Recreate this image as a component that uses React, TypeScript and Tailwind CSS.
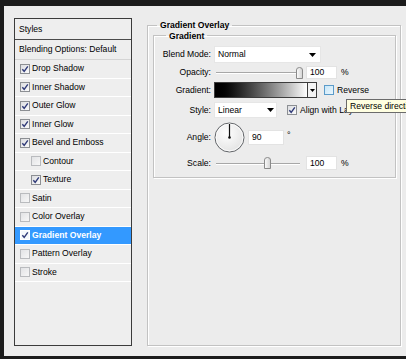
const font = "font-['Liberation_Sans',Arial,sans-serif]";

const styles = [
	{ label: "Drop Shadow", checked: true },
	{ label: "Inner Shadow", checked: true },
	{ label: "Outer Glow", checked: true },
	{ label: "Inner Glow", checked: true },
	{ label: "Bevel and Emboss", checked: true },
	{ label: "Contour", checked: false, indent: true },
	{ label: "Texture", checked: true, indent: true },
	{ label: "Satin", checked: false },
	{ label: "Color Overlay", checked: false },
	{ label: "Gradient Overlay", checked: true, active: true },
	{ label: "Pattern Overlay", checked: false },
	{ label: "Stroke", checked: false },
];

function Check({
	checked,
	active,
	hover,
}: {
	checked?: boolean;
	active?: boolean;
	hover?: boolean;
}) {
	const box = active
		? "border-white bg-[#f4f8fc]"
		: hover
			? "border-[#5b9bc9] bg-gradient-to-br from-[#c7e6f8] to-[#eaf6fd]"
			: checked
				? "border-[#8c8f93] bg-gradient-to-br from-[#dcdde0] to-[#fbfbfb]"
				: "border-[#b9bbbe] bg-gradient-to-br from-[#e2e3e5] to-[#f7f7f7]";
	return (
		<span
			className={`w-[10px] h-[10px] border shrink-0 flex items-center justify-center ${box}`}
		>
			{checked && (
				<svg width="8" height="8" viewBox="0 0 8 8">
					<path
						d="M1.3 4.2 L3.2 6.3 L6.8 1.4"
						fill="none"
						stroke="#2f3a78"
						strokeWidth="1.4"
					/>
				</svg>
			)}
		</span>
	);
}

function Arrow() {
	return (
		<svg width="7" height="4" viewBox="0 0 7 4">
			<path d="M0 0 H7 L3.5 4 Z" fill="#000" />
		</svg>
	);
}

function Slider({ pos }: { pos: number }) {
	return (
		<div className="relative w-[88px] h-full flex items-center">
			<div className="w-[84px] ml-[2px] h-[1px] bg-[#a7a7a7] shadow-[0_1px_0_#ffffff]" />
			<svg
				className="absolute top-1/2 -translate-y-1/2"
				style={{ left: pos }}
				width="7"
				height="12"
				viewBox="0 0 7 12"
			>
				<defs>
					<linearGradient id="thumb" x1="0" y1="0" x2="1" y2="0">
						<stop offset="0" stopColor="#fdfdfd" />
						<stop offset="1" stopColor="#d2d2d2" />
					</linearGradient>
				</defs>
				<path
					d="M0.5 3 Q0.5 0.5 3.5 0.5 Q6.5 0.5 6.5 3 V11.5 H0.5 Z"
					fill="url(#thumb)"
					stroke="#8a8a8a"
				/>
			</svg>
		</div>
	);
}

function NumBox({ value, w }: { value: string; w: string }) {
	return (
		<div
			className={`${w} h-full bg-white border border-[#e3e3e3] flex items-center pl-[3px]`}
		>
			{value}
		</div>
	);
}

function Label({ children }: { children: string }) {
	return <span className="w-[58px] text-right shrink-0 pr-[1px]">{children}</span>;
}

function Dial() {
	return (
		<svg width="31" height="31" viewBox="0 0 31 31">
			<defs>
				<radialGradient id="dial" cx="0.4" cy="0.35" r="0.7">
					<stop offset="0" stopColor="#ffffff" />
					<stop offset="1" stopColor="#e2e2e2" />
				</radialGradient>
			</defs>
			<circle cx="15.5" cy="15.5" r="14.5" fill="url(#dial)" stroke="#5f6266" />
			<circle cx="15.5" cy="15.5" r="13.4" fill="none" stroke="#ffffff" strokeOpacity="0.8" />
			<line x1="15.5" y1="15.5" x2="15.5" y2="2" stroke="#111" strokeWidth="1.2" />
			<circle cx="15.5" cy="15.5" r="1.3" fill="#111" />
		</svg>
	);
}

export default function App() {
	return (
		<div
			className={`w-[406px] h-[359px] bg-[#1b1b1b] pt-[6px] pl-[4px] pb-[3px] overflow-hidden ${font} text-[8.6px] text-black leading-none`}
		>
			<div className="relative h-full bg-[#ececec] flex items-start pl-[10px] pt-[12px]">
				{/* style list */}
				<div className="w-[118px] h-[328px] border border-[#3b3b3b] bg-[#eeeeee] flex flex-col shrink-0">
					<div className="h-[21px] border-b border-[#4a4a4a] flex items-center pl-[4px]">
						Styles
					</div>
					<div className="h-[20px] border-b border-[#d4d4d4] flex items-center pl-[4px]">
						Blending Options: Default
					</div>
					{styles.map((s) => (
						<div
							key={s.label}
							className={`h-[18.5px] border-b border-white flex items-center gap-[2px] ${
								s.indent ? "pl-[16px]" : "pl-[5px]"
							} ${s.active ? "bg-[#3399ff] text-white font-bold" : ""}`}
						>
							<Check checked={s.checked} active={s.active} />
							<span>{s.label}</span>
						</div>
					))}
				</div>

				{/* right side */}
				<fieldset className="ml-[15px] mt-[3px] w-[254px] h-[325px] border border-[#c2c2c2] shadow-[inset_1px_1px_0_#ffffff,1px_1px_0_#ffffff] px-[5px] pr-[4px]">
					<legend className="ml-[4px] px-[3px] font-bold">Gradient Overlay</legend>
					<fieldset className="mt-[2px] border border-[#c2c2c2] shadow-[inset_1px_1px_0_#ffffff,1px_1px_0_#ffffff] pb-[7px]">
						<legend className="ml-[12px] px-[3px] font-bold">Gradient</legend>

						<div className="mt-[6px] h-[17px] flex items-center gap-[2px]">
							<Label>Blend Mode:</Label>
							<div className="w-[107px] h-full bg-white border border-[#e6e6e6] flex items-center justify-between pl-[3px] pr-[4px]">
								<span>Normal</span>
								<Arrow />
							</div>
						</div>

						<div className="mt-[3px] h-[13px] flex items-center gap-[2px]">
							<Label>Opacity:</Label>
							<Slider pos={82} />
							<div className="ml-[2px] h-full flex items-center">
								<NumBox value="100" w="w-[31px]" />
								<span className="ml-[4px]">%</span>
							</div>
						</div>

						<div className="mt-[3px] h-[16px] flex items-center gap-[2px]">
							<Label>Gradient:</Label>
							<div className="h-full flex border border-[#3d3d3d]">
								<div className="w-[92px] h-full bg-gradient-to-r from-black to-white" />
								<div className="w-[9px] h-full bg-[#f3f3f3] border-l border-[#3d3d3d] flex items-center justify-center">
									<svg width="5" height="3" viewBox="0 0 5 3">
										<path d="M0 0 H5 L2.5 3 Z" fill="#000" />
									</svg>
								</div>
							</div>
							<div className="ml-[5px] flex items-center gap-[3px]">
								<Check hover />
								<span>Reverse</span>
							</div>
						</div>

						<div className="mt-[4px] h-[16px] flex items-center gap-[2px]">
							<Label>Style:</Label>
							<div className="w-[63px] h-full bg-white border border-[#e6e6e6] flex items-center justify-between pl-[3px] pr-[2px]">
								<span>Linear</span>
								<Arrow />
							</div>
							<div className="ml-[8px] flex items-center gap-[3px] whitespace-nowrap">
								<Check checked />
								<span>Align with Layer</span>
							</div>
						</div>

						<div className="mt-[4px] h-[31px] flex items-center gap-[2px]">
							<Label>Angle:</Label>
							<Dial />
							<div className="ml-[1px] h-[15px] flex items-start">
								<NumBox value="90" w="w-[36px]" />
								<span className="ml-[3px] mt-[1px] text-[9px]">°</span>
							</div>
						</div>

						<div className="mt-[3px] h-[14px] flex items-center gap-[2px]">
							<Label>Scale:</Label>
							<Slider pos={50} />
							<div className="ml-[2px] h-full flex items-center">
								<NumBox value="100" w="w-[31px]" />
								<span className="ml-[4px]">%</span>
							</div>
						</div>
					</fieldset>
				</fieldset>

				{/* tooltip over the dialog */}
				<div className="absolute left-[342px] top-[93px] h-[14px] bg-[#ffffe1] border border-[#6b6b6b] flex items-center px-[3px] whitespace-nowrap">
					Reverse direction of gradient
				</div>
			</div>
		</div>
	);
}
